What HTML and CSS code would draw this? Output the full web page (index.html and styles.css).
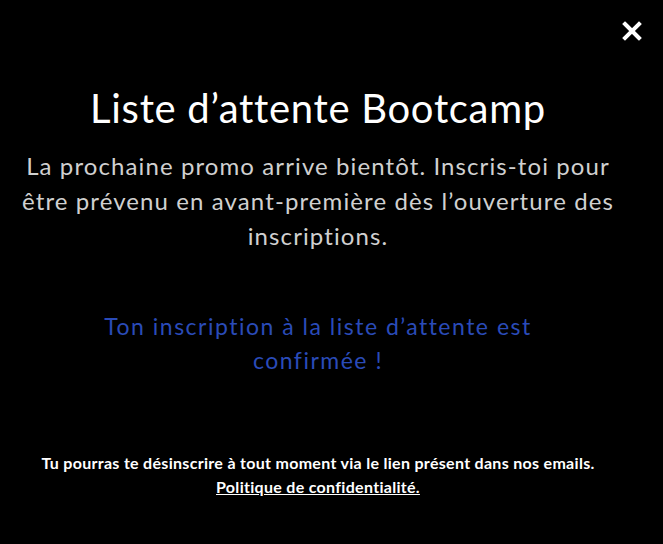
FILE: index.html
```html
<!DOCTYPE html>
<html lang="fr">
<head>
<meta charset="utf-8">
<link rel="stylesheet" href="styles.css">
</head>
<body>
<div class="modal">
  <button class="close" aria-label="Fermer">
    <svg width="20" height="20" viewBox="0 0 20 20"><path d="M3 3 L17 17 M17 3 L3 17" stroke="#fff" stroke-width="4" stroke-linecap="square"/></svg>
  </button>
  <div class="content">
    <h1 class="title">Liste d’attente Bootcamp</h1>
    <p class="lead">La prochaine promo arrive bientôt. Inscris-toi pour être prévenu en avant-première dès l’ouverture des inscriptions.</p>
    <p class="confirm">Ton inscription à la liste d’attente est confirmée !</p>
    <div class="footer">
      <p class="note">Tu pourras te désinscrire à tout moment via le lien présent dans nos emails.</p>
      <a class="policy" href="#">Politique de confidentialité.</a>
    </div>
  </div>
</div>
</body>
</html>
```
FILE: styles.css
```css
html, body {
  margin: 0;
  padding: 0;
  background: #000;
}
body {
  font-family: "Lato", "Open Sans", sans-serif;
  color: #fff;
}
.modal {
  position: relative;
  width: 663px;
  height: 544px;
  background: #000;
}
.close {
  position: absolute;
  top: 21px;
  right: 21px;
  width: 20px;
  height: 20px;
  padding: 0;
  border: 0;
  background: transparent;
  cursor: pointer;
}
.close svg { display: block; }
.content {
  display: flex;
  flex-direction: column;
  align-items: center;
  text-align: center;
  padding: 82px 27px 0 0;
}
.title {
  margin: 0;
  font-size: 40px;
  font-weight: 400;
  line-height: 52px;
  letter-spacing: 0.7px;
  color: #fff;
}
.lead {
  margin: 14px 0 0;
  max-width: 620px;
  font-size: 24px;
  line-height: 35px;
  letter-spacing: 1.1px;
  color: #d0d0d0;
}
.confirm {
  margin: 56px 0 0;
  width: 440px;
  font-size: 23px;
  line-height: 34px;
  letter-spacing: 1.5px;
  color: #2a4bb8;
}
.footer {
  margin-top: 74px;
  font-size: 16px;
  line-height: 24px;
  font-weight: 700;
  letter-spacing: 0.3px;
}
.note { margin: 0; }
.policy {
  color: #fff;
  text-decoration: underline;
}
```
